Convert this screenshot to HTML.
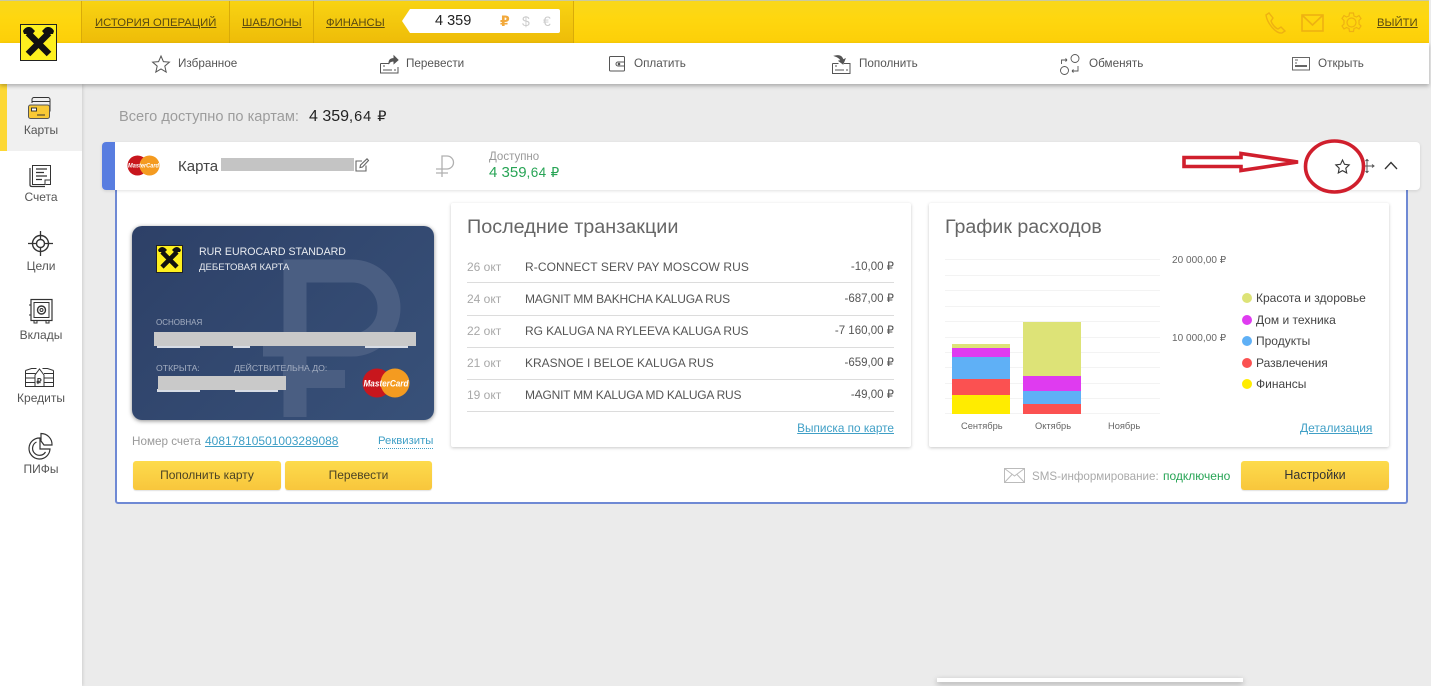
<!DOCTYPE html>
<html lang="ru"><head><meta charset="utf-8"><title>Карты</title>
<style>
html,body{margin:0;padding:0;width:1431px;height:686px;overflow:hidden;background:#ebebeb;font-family:"Liberation Sans","DejaVu Sans",sans-serif;color:#444}
div,a,span.t,svg.a{position:absolute}
.t{position:absolute;white-space:nowrap;line-height:1}
.u{text-decoration:underline}
.link{color:#3f9fc6;text-decoration:underline}
.panel{background:#fff;box-shadow:0 1px 3px rgba(0,0,0,.22);border-radius:2px}
.btn{background:linear-gradient(#fddb4c,#f8c63c);border-radius:3px;box-shadow:0 1px 1px rgba(0,0,0,.12);text-align:center;font-size:12px;line-height:29px;color:#4a4224;height:29px}
.row{position:absolute;left:467px;width:427px;height:1px;background:#dcdcdc}
.dt{color:#a8a8a8;font-size:12px}.nm{color:#555;font-size:12px}.am{color:#555;font-size:11.5px}
.grid{position:absolute;left:945px;width:215px;height:1px;background:#f3f3f3}
.side{font-size:12px;color:#555;text-align:center;left:0;width:82px;position:absolute;line-height:1}
.navt{font-size:11.7px;color:#555}
.leg{font-size:12px;color:#444}
.dot{width:10px;height:10px;border-radius:50%}
svg{position:absolute;overflow:visible}
</style></head><body>

<!-- top bar -->
<div style="left:0;top:0;width:1429px;height:43px;background:linear-gradient(#f9d71c 0,#fed70f 40%,#fdcf08 100%);border-top:1px solid #c9c9a0;box-sizing:border-box"></div>
<div style="left:81px;top:1px;width:492px;height:42px;background:linear-gradient(#f8d313,#eebc08)"></div>
<div style="left:81px;top:1px;width:1px;height:42px;background:#d9ab08"></div>
<div style="left:229px;top:1px;width:1px;height:42px;background:#d9ab08"></div>
<div style="left:313px;top:1px;width:1px;height:42px;background:#d9ab08"></div>
<div style="left:573px;top:1px;width:1px;height:42px;background:#d9ab08"></div>
<span class="t u" style="left:95px;top:18px;font-size:11.300px;color:#5a4a10">ИСТОРИЯ ОПЕРАЦИЙ</span>
<span class="t u" style="left:242px;top:18px;font-size:11.300px;color:#5a4a10">ШАБЛОНЫ</span>
<span class="t u" style="left:326px;top:18px;font-size:11.300px;color:#5a4a10">ФИНАНСЫ</span>
<svg style="left:401px;top:8px" width="160" height="26"><path d="M9 0H157a2 2 0 0 1 2 2V22a2 2 0 0 1-2 2H9L1 12Z" transform="translate(0 1)" fill="#fff"/></svg>
<span class="t" style="left:435px;top:14px;font-size:14.500px;color:#222">4 359</span>
<span class="t" style="left:500px;top:14px;font-size:14px;font-weight:bold;color:#f2a93c">₽</span>
<span class="t" style="left:522px;top:14px;font-size:14px;color:#ccc">$</span>
<span class="t" style="left:543px;top:14px;font-size:14px;color:#ccc">€</span>

<svg style="left:1264px;top:12px" width="22" height="22" fill="none" stroke="#eeb112" stroke-width="1.4"><path d="M2 3 5 1l4 5-2 3c1 3 4 7 7 8l3-2 4 4-3 2C12 22 3 11 2 3Z"/></svg>
<svg style="left:1301px;top:14px" width="23" height="18" fill="none" stroke="#eeb112" stroke-width="1.6"><rect x="1" y="1" width="21" height="16"/><path d="M1 1 11.500 11 22 1"/></svg>
<svg style="left:1341px;top:12px" width="21" height="21" fill="none" stroke="#eeb112" stroke-width="1.2"><circle cx="10.500" cy="10.500" r="4.500"/><path d="M8.500 1h4l.5 3 2.500 1 2.500-1.500 2 3-2 2v3.500l2 2-2 3-2.500-1.500-2.500 1-.5 3h-4l-.5-3-2.500-1-2.500 1.500-2-3 2-2V8.500l-2-2 2-3L5.500 5 8 4Z"/></svg>
<span class="t u" style="left:1377px;top:18px;font-size:11.300px;color:#5a4a10">ВЫЙТИ</span>

<!-- sidebar -->
<div style="left:0;top:84px;width:82px;height:602px;background:#fff;box-shadow:1px 0 3px rgba(0,0,0,.12)"></div>
<div style="left:0;top:84px;width:82px;height:67px;background:#f0f0f0"></div>
<div style="left:0;top:84px;width:7px;height:67px;background:#fdd835"></div>
<!-- nav row -->
<div style="left:0;top:43px;width:1429px;height:41px;background:#fff;box-shadow:0 2px 4px rgba(0,0,0,.28)"></div>

<!-- logo -->
<svg style="left:20px;top:24px" width="37" height="37"><rect x=".5" y=".5" width="36" height="36" fill="#fef01e" stroke="#222"/><path d="M8 9 29 30M29 9 8 30" stroke="#111" stroke-width="6.500"/><path d="M3 7c2-4 6-5 9-3l3 3-5 6-3-3-3 0ZM34 7c-2-4-6-5-9-3l-3 3 5 6 3-3 3 0Z" fill="#111"/></svg>

<!-- nav items -->
<svg style="left:152px;top:55px" width="18" height="18" fill="none" stroke="#555"><path d="M9 1l2.400 5.600 6 .5-4.600 4 1.400 6L9 14l-5.200 3.100 1.400-6-4.600-4 6-.5Z"/></svg>
<span class="t navt" style="left:178px;top:58px">Избранное</span>
<svg style="left:380px;top:55px" width="19" height="19" fill="none" stroke="#555"><path d="M.5 8.500h9M.5 8.500v9.500h17.500v-6M3 15h9M14 15h2M3 11h2" /><path d="M9 8c0-3 2-4.500 5-4.500V1l4 4-4 3.500V6c-2 0-4 .5-5 2Z" fill="#555"/></svg>
<span class="t navt" style="left:406px;top:58px">Перевести</span>
<svg style="left:609px;top:56px" width="17" height="16" fill="none" stroke="#555"><rect x=".5" y=".5" width="15" height="14.500" rx="1"/><path d="M15 6H9a2 2 0 0 0 0 4h6"/><circle cx="10" cy="8" r=".8" fill="#555"/></svg>
<span class="t navt" style="left:634px;top:58px">Оплатить</span>
<svg style="left:832px;top:54px" width="19" height="20" fill="none" stroke="#555"><path d="M.5 9.500h6M12 9.500h6v10H.5v-10M3 16h9M14 16h2M3 12h2"/><path d="M3 2c4-1 7 0 8 4l2-1-2 5-4-3 2-.5C8 4.500 6 3 3 2Z" fill="#555"/></svg>
<span class="t navt" style="left:859px;top:58px">Пополнить</span>
<svg style="left:1060px;top:54px" width="22" height="22" fill="none" stroke="#555" stroke-width=".9"><circle cx="15" cy="4.500" r="4"/><circle cx="4.500" cy="16.500" r="4"/><path d="M1.500 10V6H7M7 6 5.500 4.500M7 6 5.500 7.500M18 12v5h-6M12 17l1.500-1.500M12 17l1.500 1.500"/></svg>
<span class="t navt" style="left:1089px;top:58px">Обменять</span>
<svg style="left:1292px;top:57px" width="18" height="14" fill="none" stroke="#666"><rect x=".5" y=".5" width="17" height="12.500"/><path d="M3 3h3M3 6h2" /><path d="M3 9h12" stroke-width="2"/></svg>
<span class="t navt" style="left:1318px;top:58px">Открыть</span>

<!-- side icons -->
<svg style="left:28px;top:97px" width="25" height="23" fill="none" stroke="#333"><path d="M4 6V2.500a2 2 0 0 1 2-2h14a2 2 0 0 1 2 2v12"/><path d="M4 4.500h18"/><rect x=".5" y="8" width="21" height="13.500" rx="2" fill="#f9c935" stroke="#555"/><rect x="3.500" y="11" width="5" height="3" fill="#fff"/><path d="M9 18h8"/></svg>
<div class="side" style="top:124px">Карты</div>
<svg style="left:29px;top:164px" width="23" height="23" fill="none" stroke="#333"><rect x="3.500" y="1.500" width="18" height="19" /><path d="M1 4v17c0 1 1 1.500 2 1.500h13M7 5h11M7 8.500h8M7 12h11M7 15.500h6" stroke-width="1.200"/><path d="M16 21v-5h6" fill="#fff"/></svg>
<div class="side" style="top:191px">Счета</div>
<svg style="left:28px;top:231px" width="25" height="25" fill="none" stroke="#333"><circle cx="12.500" cy="12.500" r="8" stroke-width="1.400"/><circle cx="12.500" cy="12.500" r="4" stroke-width="1.400"/><path d="M12.500 0v8M12.500 17v8M0 12.500h8M17 12.500h8" stroke-width="1.300"/></svg>
<div class="side" style="top:260px">Цели</div>
<svg style="left:29px;top:299px" width="24" height="25" fill="none" stroke="#333"><rect x="2" y=".5" width="21" height="21" stroke-width="1.200"/><rect x="5" y="3.500" width="15" height="15"/><circle cx="12.500" cy="11" r="4" stroke-width="1.400"/><circle cx="12.500" cy="11" r="1.500"/><path d="M0 6h2M0 16h2M5 22v2h3v-2M17 22v2h3v-2"/></svg>
<div class="side" style="top:329px">Вклады</div>
<svg style="left:25px;top:368px" width="30" height="20" fill="none" stroke="#333"><path d="M.5 5.500h10M.5 10h10M.5 14.500h10M19 5.500h10M19 10h10M19 14.500h10M.5 2.500v16h28v-16M.5 2.500l6-2h5M28.500 2.500l-6-2h-5M10 18V7l4.500-6L19 7v11"/><text x="11.500" y="16" font-size="8" font-weight="bold" fill="#333" stroke="none" font-family="Liberation Sans">₽</text></svg>
<div class="side" style="top:392px">Кредиты</div>
<svg style="left:27px;top:433px" width="26" height="26" fill="none" stroke="#333" stroke-width="1.200"><path d="M13 5A10.500 10.500 0 1 0 23 16H13Z"/><path d="M9.500 9A7 7 0 1 0 18.500 19"/><path d="M14 .5A11 11 0 0 1 25 12H17L14 8Z"/></svg>
<div class="side" style="top:463px">ПИФы</div>

<!-- total -->
<span class="t" style="left:119px;top:110px;font-size:14.600px;color:#9c9c9c">Всего доступно по картам:</span>
<span class="t" style="left:309px;top:109px;font-size:16px;color:#222">4 359<span style="font-size:14.500px;letter-spacing:1px">,64 ₽</span></span>

<!-- expanded panel -->
<div style="left:115px;top:186px;width:1293px;height:318px;box-sizing:border-box;background:#fff;border:2px solid #6f89d4;border-radius:3px"></div>

<!-- card header -->
<div style="left:102px;top:142px;width:1318px;height:48px;background:#fff;border-radius:4px;box-shadow:0 1px 3px rgba(0,0,0,.12)"></div>
<div style="left:102px;top:142px;width:13px;height:48px;background:#587de0;border-radius:4px 0 0 4px"></div>
<svg style="left:127px;top:155px" width="33" height="21"><circle cx="10.500" cy="10.500" r="10" fill="#c8161d"/><circle cx="22.500" cy="10.500" r="10" fill="#f49b20"/><text x="16.500" y="12.500" text-anchor="middle" font-size="6" font-weight="bold" font-style="italic" fill="#fff" font-family="Liberation Sans" textLength="31" lengthAdjust="spacingAndGlyphs">MasterCard</text></svg>
<span class="t" style="left:178px;top:159px;font-size:15px;color:#444">Карта</span>
<div style="left:221px;top:158px;width:133px;height:13px;background:#c4c4c4"></div>
<svg style="left:355px;top:158px" width="14" height="14" fill="none" stroke="#666" stroke-width="1.100"><path d="M11 7.500V13H1V3h6"/><path d="M5 9.500 5.500 7 12 .8 13.500 2.500 7.500 9Z"/></svg>
<svg style="left:436px;top:155px" width="18" height="22" fill="none" stroke="#b0b0b0" stroke-width="1.300"><path d="M6 22V1h5a6.500 6.500 0 0 1 0 13H0M0 18h12"/></svg>
<span class="t" style="left:489px;top:152px;font-size:11.500px;color:#999">Доступно</span>
<span class="t" style="left:489px;top:165px;font-size:15px;color:#27a455">4 359<span style="font-size:13.500px;letter-spacing:.4px">,64 ₽</span></span>

<svg style="left:1335px;top:159px" width="15" height="15" fill="none" stroke="#333" stroke-width="1.100"><path d="M7.500 1l2 4.300 4.700.6-3.400 3.300.9 4.700-4.200-2.300-4.200 2.300.9-4.700L.8 5.900l4.700-.6Z"/></svg>
<svg style="left:1362px;top:159px" width="13" height="14" fill="none" stroke="#555"><path d="M5 0v14M0 7h12M3.500 2 5 .5 6.500 2M3.500 12 5 13.500 6.500 12"/><path d="M10 5.500 12 7l-2 1.500" /></svg>
<svg style="left:1384px;top:161px" width="14" height="9" fill="none" stroke="#333" stroke-width="1.300"><path d="M1 8 7 1.500 13 8"/></svg>

<!-- annotation -->
<svg style="left:0;top:0" width="1431" height="686" fill="none" stroke="#d01f2d"><path d="M1184 157.500H1241V153.500L1298 162 1241 170.500V166.500H1184Z" stroke-width="3.600"/><ellipse cx="1334.500" cy="166.500" rx="29" ry="25.500" stroke-width="3.600"/></svg>

<!-- bank card -->
<div style="left:132px;top:226px;width:302px;height:194px;border-radius:10px;background:linear-gradient(135deg,#2d4067,#385179);box-shadow:0 1px 4px rgba(0,0,0,.45)"></div>
<svg style="left:132px;top:226px" width="302" height="194" fill="none" stroke="#4a5e82" stroke-width="23"><path d="M163 191V45H220a37 37 0 0 1 0 74H131"/></svg>
<div style="left:283px;top:370px;width:62px;height:18px;background:#4a5e82"></div>
<svg style="left:156px;top:245px" width="27" height="28"><rect x=".5" y=".5" width="26" height="27" fill="#fef01e" stroke="#222"/><path d="M6 7 21 22M21 7 6 22" stroke="#111" stroke-width="4.600"/><path d="M2 5c2-3 4-4 7-2l2 2-4 4-2-2H3ZM25 5c-2-3-4-4-7-2l-2 2 4 4 2-2h2Z" fill="#111"/></svg>
<span class="t" style="left:199px;top:247px;font-size:10.600px;color:#e8ebf0">RUR EUROCARD STANDARD</span>
<span class="t" style="left:199px;top:263px;font-size:9.600px;color:#e8ebf0">ДЕБЕТОВАЯ КАРТА</span>
<span class="t" style="left:156px;top:319px;font-size:8px;color:#a5afc2">ОСНОВНАЯ</span>
<div style="left:157px;top:345px;width:43px;height:3px;background:#d7dce5"></div>
<div style="left:233px;top:345px;width:17px;height:3px;background:#d7dce5"></div>
<div style="left:365px;top:345px;width:43px;height:3px;background:#d7dce5"></div>
<div style="left:154px;top:332px;width:262px;height:14px;background:#c9c9c9"></div>
<span class="t" style="left:156px;top:364px;font-size:8.700px;color:#a5afc2">ОТКРЫТА:</span>
<span class="t" style="left:234px;top:364px;font-size:8.700px;color:#a5afc2">ДЕЙСТВИТЕЛЬНА ДО:</span>
<div style="left:157px;top:389px;width:43px;height:3px;background:#d7dce5"></div>
<div style="left:235px;top:389px;width:43px;height:3px;background:#d7dce5"></div>
<div style="left:158px;top:376px;width:128px;height:14px;background:#c9c9c9"></div>
<svg style="left:362px;top:368px" width="48" height="30"><circle cx="15" cy="15" r="14.500" fill="#c8161d"/><circle cx="33" cy="15" r="14.500" fill="#f49b20"/><text x="24" y="18.500" text-anchor="middle" font-size="9.500" font-weight="bold" font-style="italic" fill="#fff" font-family="Liberation Sans" textLength="45" lengthAdjust="spacingAndGlyphs">MasterCard</text></svg>

<span class="t" style="left:132px;top:436px;font-size:11.700px;color:#999">Номер счета</span>
<span class="t link" style="left:205px;top:435px;font-size:12px">40817810501003289088</span>
<span class="t" style="left:378px;top:436px;font-size:11.300px;color:#3f9fc6;border-bottom:1px dotted #3f9fc6;padding-bottom:1px">Реквизиты</span>
<div class="btn" style="left:133px;top:461px;width:148px">Пополнить карту</div>
<div class="btn" style="left:285px;top:461px;width:147px">Перевести</div>

<!-- transactions -->
<div class="panel" style="left:451px;top:203px;width:460px;height:244px"></div>
<span class="t" style="left:467px;top:218px;font-size:19.800px;color:#666">Последние транзакции</span>
<span class="t dt" style="left:467px;top:261px">26 окт</span><span class="t nm" style="left:525px;top:261px;letter-spacing:.08px">R-CONNECT SERV PAY MOSCOW RUS</span><span class="t am" style="right:537px;top:262px">-10,00 ₽</span>
<div class="row" style="top:282px"></div>
<span class="t dt" style="left:467px;top:293px">24 окт</span><span class="t nm" style="left:525px;top:293px;letter-spacing:-.2px">MAGNIT MM BAKHCHA KALUGA RUS</span><span class="t am" style="right:537px;top:294px">-687,00 ₽</span>
<div class="row" style="top:315px"></div>
<span class="t dt" style="left:467px;top:325px">22 окт</span><span class="t nm" style="left:525px;top:325px;letter-spacing:-.07px">RG KALUGA NA RYLEEVA KALUGA RUS</span><span class="t am" style="right:537px;top:326px">-7 160,00 ₽</span>
<div class="row" style="top:347px"></div>
<span class="t dt" style="left:467px;top:357px">21 окт</span><span class="t nm" style="left:525px;top:357px">KRASNOE I BELOE KALUGA RUS</span><span class="t am" style="right:537px;top:358px">-659,00 ₽</span>
<div class="row" style="top:379px"></div>
<span class="t dt" style="left:467px;top:389px">19 окт</span><span class="t nm" style="left:525px;top:389px;letter-spacing:-.23px">MAGNIT MM KALUGA MD KALUGA RUS</span><span class="t am" style="right:537px;top:390px">-49,00 ₽</span>
<div class="row" style="top:411px"></div>
<span class="t link" style="right:537px;top:423px;font-size:11.800px">Выписка по карте</span>

<!-- chart -->
<div class="panel" style="left:929px;top:203px;width:460px;height:244px"></div>
<span class="t" style="left:945px;top:218px;font-size:19.600px;color:#666">График расходов</span>
<div class="grid" style="top:259px"></div><div class="grid" style="top:275px"></div><div class="grid" style="top:290px"></div><div class="grid" style="top:306px"></div><div class="grid" style="top:321px"></div><div class="grid" style="top:337px"></div><div class="grid" style="top:352px"></div><div class="grid" style="top:367px"></div><div class="grid" style="top:383px"></div><div class="grid" style="top:398px"></div><div class="grid" style="top:413px"></div>
<div style="left:952px;top:344px;width:58px;height:4px;background:#dde377"></div>
<div style="left:952px;top:348px;width:58px;height:9px;background:#df3bf0"></div>
<div style="left:952px;top:357px;width:58px;height:22px;background:#5fb0f6"></div>
<div style="left:952px;top:379px;width:58px;height:16px;background:#fb5151"></div>
<div style="left:952px;top:395px;width:58px;height:19px;background:#ffec00"></div>
<div style="left:1023px;top:322px;width:58px;height:54px;background:#dde377"></div>
<div style="left:1023px;top:376px;width:58px;height:15px;background:#df3bf0"></div>
<div style="left:1023px;top:391px;width:58px;height:13px;background:#5fb0f6"></div>
<div style="left:1023px;top:404px;width:58px;height:10px;background:#fb5151"></div>
<span class="t" style="left:961px;top:422px;font-size:9.300px;color:#666">Сентябрь</span>
<span class="t" style="left:1035px;top:422px;font-size:9.300px;color:#666">Октябрь</span>
<span class="t" style="left:1108px;top:422px;font-size:9.300px;color:#666">Ноябрь</span>
<span class="t" style="left:1172px;top:256px;font-size:10px;color:#666;letter-spacing:.05px">20 000,00 ₽</span>
<span class="t" style="left:1172px;top:334px;font-size:10px;color:#666;letter-spacing:.05px">10 000,00 ₽</span>
<div class="dot" style="left:1242px;top:293px;background:#dde377"></div><span class="t leg" style="left:1256px;top:292px">Красота и здоровье</span>
<div class="dot" style="left:1242px;top:315px;background:#df3bf0"></div><span class="t leg" style="left:1256px;top:314px">Дом и техника</span>
<div class="dot" style="left:1242px;top:336px;background:#5fb0f6"></div><span class="t leg" style="left:1256px;top:335px">Продукты</span>
<div class="dot" style="left:1242px;top:358px;background:#fb5151"></div><span class="t leg" style="left:1256px;top:357px">Развлечения</span>
<div class="dot" style="left:1242px;top:379px;background:#ffec00"></div><span class="t leg" style="left:1256px;top:378px">Финансы</span>
<span class="t link" style="left:1300px;top:422px;font-size:12px">Детализация</span>

<!-- sms -->
<svg style="left:1004px;top:468px" width="22" height="15" fill="none" stroke="#bbb"><rect x=".5" y=".5" width="20" height="14"/><path d="M.5 .5 10.500 8 20.500 .5M.5 14.500 8 6.500M20.500 14.500 13 6.500"/></svg>
<span class="t" style="left:1032px;top:471px;font-size:11.600px;color:#aaa">SMS-информирование:</span>
<span class="t" style="left:1163px;top:470px;font-size:12px;color:#27a455">подключено</span>
<div class="btn" style="left:1241px;top:461px;width:148px;color:#333;font-size:12.500px">Настройки</div>

<!-- bottom strip -->
<div style="left:937px;top:678px;width:306px;height:4px;background:#fff;box-shadow:0 2px 6px rgba(0,0,0,.3)"></div>
</body></html>
